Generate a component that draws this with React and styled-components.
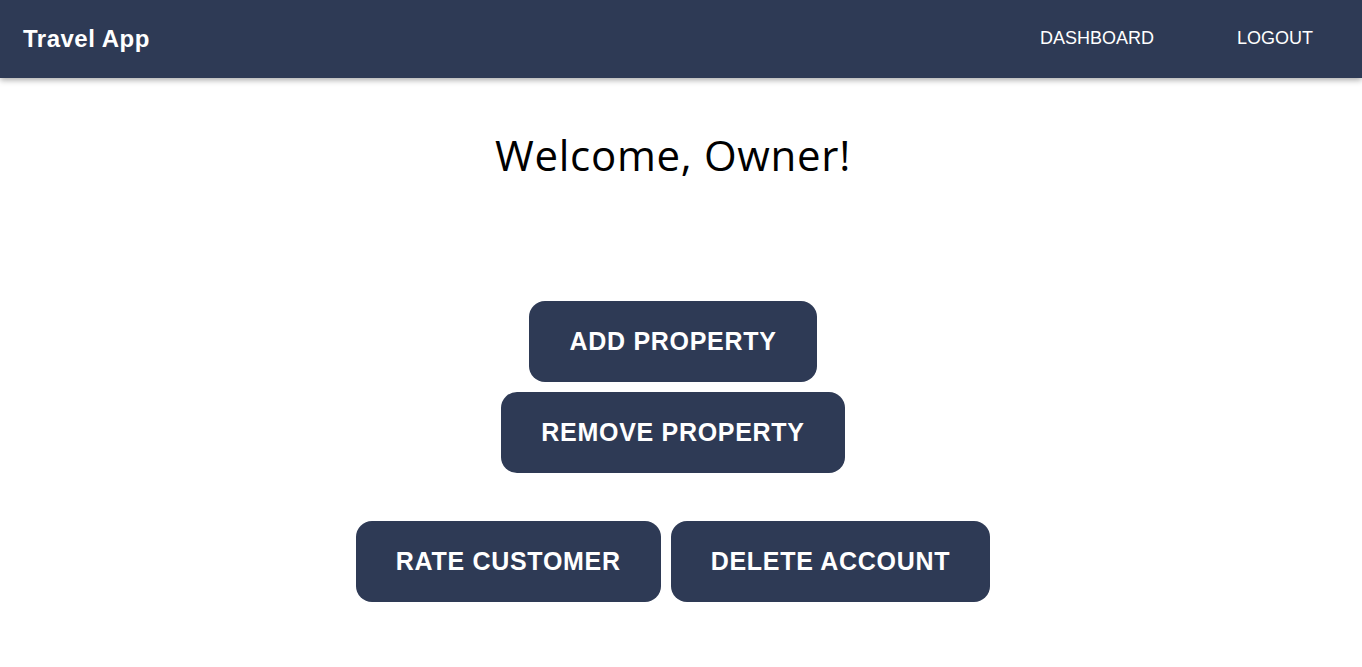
import React from 'react';
import styled, { createGlobalStyle } from 'styled-components';

const GlobalStyle = createGlobalStyle`
  body {
    margin: 0;
    background: #ffffff;
    font-family: "Liberation Sans", Arial, sans-serif;
  }
`;

export default function App() {
  return (
    <>
      <GlobalStyle />
      <Navbar>
        <Logo>Travel App</Logo>
        <NavLinks>
          <NavLink href="#">DASHBOARD</NavLink>
          <NavLink href="#">LOGOUT</NavLink>
        </NavLinks>
      </Navbar>
      <Main>
        <Title>Welcome, Owner!</Title>
        <ButtonGroup>
          <Row>
            <Button>ADD PROPERTY</Button>
          </Row>
          <Row>
            <Button>REMOVE PROPERTY</Button>
          </Row>
          <Row $spaced>
            <Button>RATE CUSTOMER</Button>
            <Button>DELETE ACCOUNT</Button>
          </Row>
        </ButtonGroup>
      </Main>
    </>
  );
}

const Navbar = styled.nav`
  height: 78px;
  background: #2e3a55;
  display: flex;
  align-items: center;
  justify-content: space-between;
  padding: 0 23px;
  box-shadow: 0 2px 6px rgba(0, 0, 0, 0.35);
  position: relative;
`;

const Logo = styled.div`
  color: #ffffff;
  font-weight: bold;
  font-size: 24px;
  letter-spacing: 0.5px;
  margin-top: -1px;
`;

const NavLinks = styled.div`
  display: flex;
  align-items: center;
  gap: 83px;
  margin-right: 26px;
  margin-top: -2px;
`;

const NavLink = styled.a`
  color: #ffffff;
  text-decoration: none;
  font-size: 18px;
`;

const Main = styled.main`
  display: flex;
  flex-direction: column;
  align-items: center;
  padding-right: 16px;
`;

const Title = styled.h1`
  font-family: "Open Sans", sans-serif;
  font-weight: 400;
  font-size: 42px;
  letter-spacing: 0.7px;
  color: #000000;
  margin: 48px 0 0;
`;

const ButtonGroup = styled.div`
  display: flex;
  flex-direction: column;
  align-items: center;
  gap: 10px;
  margin-top: 118px;
`;

const Row = styled.div`
  display: flex;
  gap: 10px;
  margin-top: ${p => (p.$spaced ? '38px' : '0')};
`;

const Button = styled.button`
  background: #2e3a55;
  color: #ffffff;
  border: none;
  border-radius: 16px;
  padding: 0 40px 1px;
  height: 81px;
  font-family: "Liberation Sans", Arial, sans-serif;
  font-weight: bold;
  font-size: 25px;
  letter-spacing: 0.7px;
  cursor: pointer;
`;
